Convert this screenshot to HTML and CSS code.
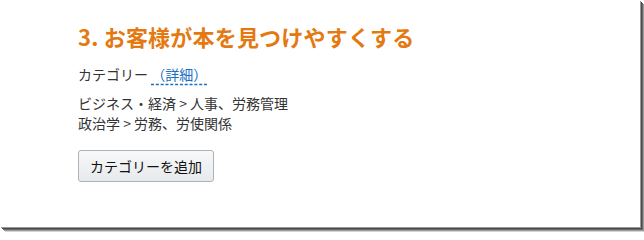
FILE: index.html
```html
<!DOCTYPE html>
<html lang="ja">
<head>
<meta charset="utf-8">
<link rel="stylesheet" href="styles.css">
</head>
<body>
<div class="frame">
  <div class="content">
    <h2 class="title">3. お客様が本を見つけやすくする</h2>
    <div class="label">カテゴリー <a class="detail">（詳細）</a></div>
    <div class="cats">
      <div>ビジネス・経済 &gt; 人事、労務管理</div>
      <div>政治学 &gt; 労務、労使関係</div>
    </div>
    <button class="btn">カテゴリーを追加</button>
  </div>
</div>
</body>
</html>
```
FILE: styles.css
```css
html, body {
  margin: 0;
  padding: 0;
  background: #ffffff;
  height: 232px;
  overflow: hidden;
}
.frame {
  width: 640px;
  height: 227px;
  background: #ffffff;
  box-sizing: border-box;
  box-shadow: 1px 1px 0 #9a9a9a, 2px 2px 0 #4a4a4a, 3px 3px 0 #6a6a6a, 4px 4px 0 #9c9c9c, 5px 5px 0 #d4d4d4;
  font-family: "Noto Sans CJK JP", "Noto Sans", sans-serif;
}
.content {
  padding: 20px 0 0 78px;
  display: flex;
  flex-direction: column;
  align-items: flex-start;
}
.title {
  margin: 0;
  color: #e47911;
  font-size: 22px;
  font-weight: 700;
  line-height: 32px;
  letter-spacing: 0.2px;
}
.label {
  margin-top: 12px;
  font-size: 14px;
  line-height: 20px;
  color: #333333;
}
.detail {
  color: #1a6fc4;
  text-decoration: underline dashed #1a6fc4;
  text-underline-offset: 4px;
}
.cats {
  margin-top: 9px;
  font-size: 14px;
  line-height: 20px;
  color: #333333;
}
.btn {
  margin-top: 17px;
  height: 32px;
  padding: 0 11px;
  font-family: "Noto Sans CJK JP", "Noto Sans", sans-serif;
  font-size: 14px;
  color: #111111;
  background: linear-gradient(#f7f8fa, #e7e9ec);
  border: 1px solid #adb1b8;
  border-radius: 3px;
}
```
